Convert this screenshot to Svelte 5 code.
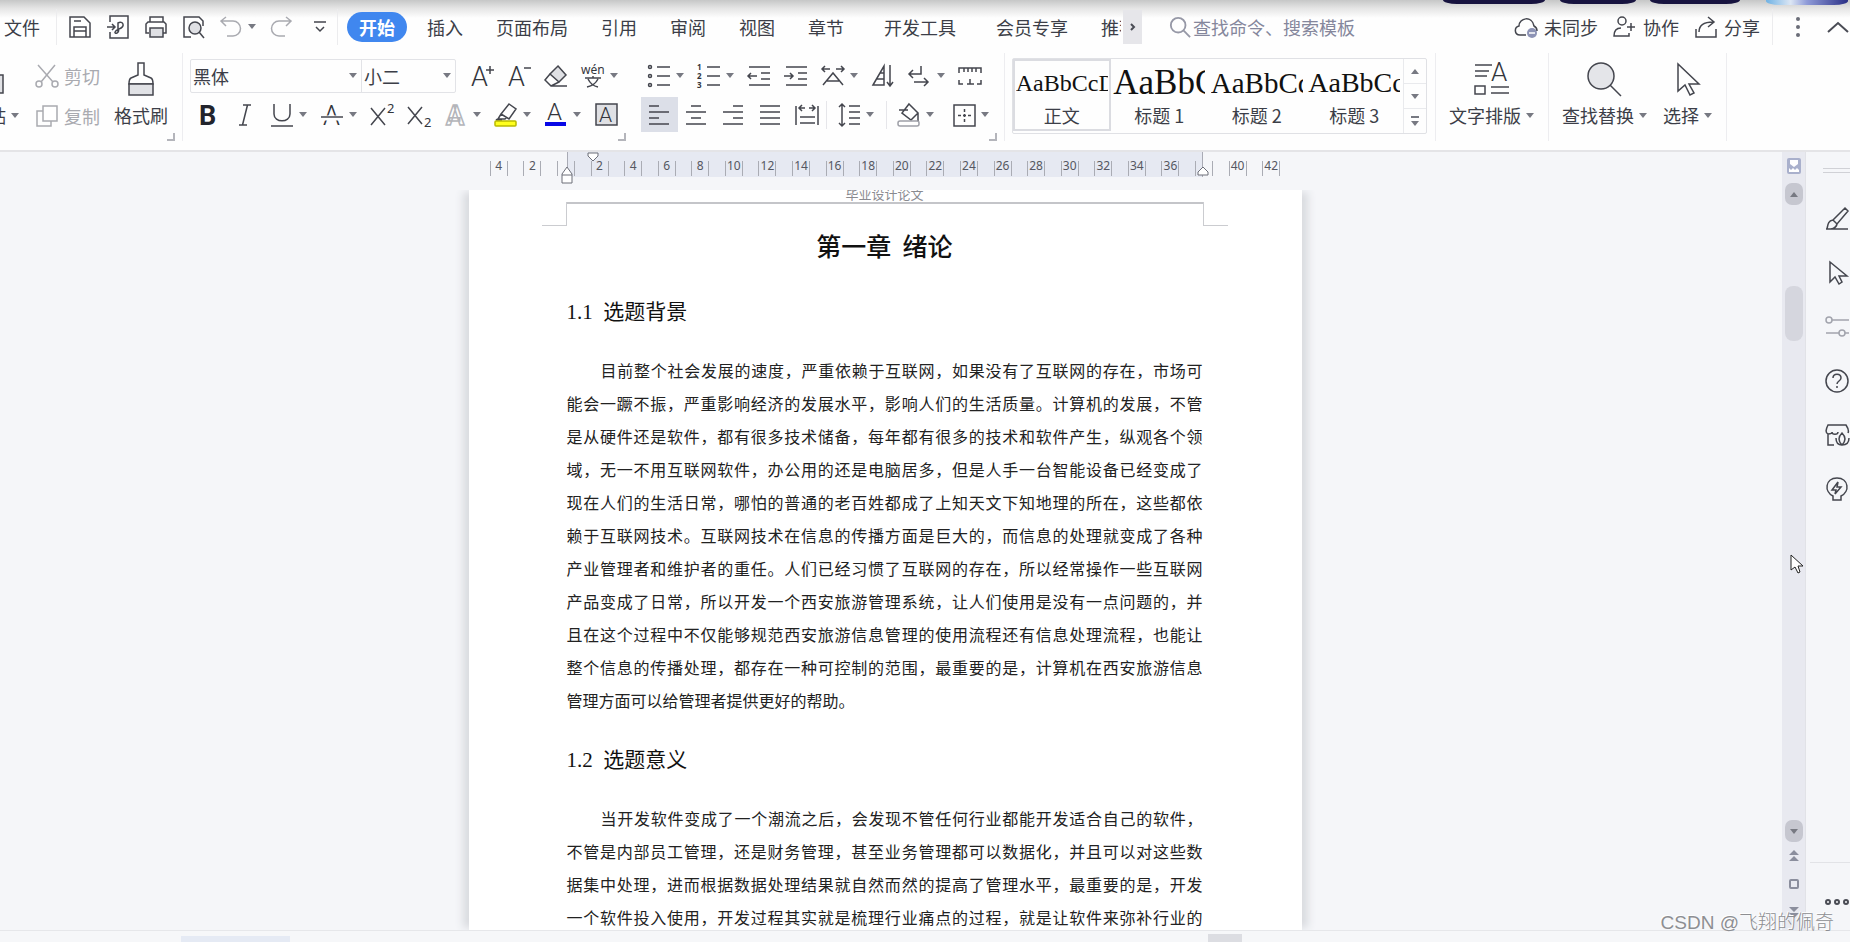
<script>
    let activeTab = $state("开始");
    let align = $state("left");
    let style = $state("正文");
    let fontName = $state("黑体");
    let fontSize = $state("小二");
    let query = $state("");

    const A = (x, y, size) =>
        `<text x="${x}" y="${y}" font-size="${size}" font-family="Roboto, sans-serif" font-weight="300" stroke="none" fill="#33353c">A</text>`;

    // inner markup of the icons, drawn on a 24 x 24 grid
    const icons = {
        save: `<path d="M2 2h14l6 6v14H2z"/><path d="M6 22v-10h12v10M6 6h7M6 16h12" />`,
        output: `<path d="M4 7V1h18v22H4v-6M1 12h8M6 9l3 3-3 3"/><path d="M12 17V8c5-3 8 4 1 6-5 2-5 5-2 4 2-1 2-3 1-4"/>`,
        print: `<path d="M6 7V2h13v5M5 18H2V9l2-2h16l2 2v9h-3"/><path d="M6 13h13v9H6z" fill="#dfe0e4"/>`,
        preview: `<path d="M9 22H2V2h15l4 4v5"/><circle cx="13" cy="13" r="6" fill="#dfe0e4"/><path d="M17 17l5 6"/>`,
        undo: `<path d="M6 2L1 6l5 5M1 6h12a7 7 0 0 1 0 15H7"/>`,
        redo: `<path d="M16 2l5 4-5 5M21 6H9a7 7 0 0 0 0 15h6"/>`,
        more: `<path d="M6 7h12M8 12l4 4 4-4"/>`,
        cut: `<path d="M3 1l15 17M20 1L6 18"/><circle cx="4" cy="20" r="3"/><circle cx="20" cy="20" r="3"/>`,
        copy: `<path d="M8 2h14v15H8z" fill="#fff"/><path d="M8 7H2v15h14v-5"/>`,
        grow: A(1, 22, 27) + `<path d="M20 2v8M16 6h8"/>`,
        shrink: A(1, 22, 27) + `<path d="M17 4h7"/>`,
        eraser: `<path d="M14 2l8 9-7 7-9-8z" fill="#dfe0e4"/><path d="M6 10l-5 6 6 6h16M7 22l8-4"/>`,
        pinyin: `<text x="0" y="10" font-size="12" font-family="Noto Sans, sans-serif" stroke="none" fill="#33353c">wén</text><path d="M4 14h16M12 12v2M7 15c2 4 5 7 10 8M17 15c-2 4-6 7-11 8"/>`,
        bold: `<text x="3" y="22" font-size="27" font-family="Roboto, sans-serif" font-weight="700" stroke="none" fill="#22242c">B</text>`,
        italic: `<path d="M10 2h8M6 22h8M14.500 2l-5 20"/>`,
        underline: `<path d="M4 1v10c0 9 16 9 16 0V1M1 23h22"/>`,
        strike: A(3, 22, 27) + `<path d="M4 15h17" stroke="#fff" stroke-width="5"/><path d="M1 14h22"/>`,
        sup: `<path d="M1 5l14 17M15 5L1 22"/><text x="17" y="10" font-size="13" font-family="Noto Sans, sans-serif" stroke="none" fill="#33353c">2</text>`,
        sub: `<path d="M1 4l14 17M15 4L1 21"/><text x="17" y="24" font-size="13" font-family="Noto Sans, sans-serif" stroke="none" fill="#33353c">2</text>`,
        outline: `<text x="2" y="22" font-size="27" font-family="Roboto, sans-serif" font-weight="700" fill="#fff" stroke="#b4b5ba">A</text>`,
        marker: `<path d="M15 1l7 5-7 10-8-5zM7 11l-3 5h7l2-2M4 16l-2 1h6"/><rect x="1" y="18" width="21" height="5" rx="1" fill="#ffff1e" stroke="#b9b900"/>`,
        color: A(3, 17, 24) + `<rect x="1" y="19" width="21" height="4" fill="#0808e6" stroke="none"/>`,
        shade: `<rect x="2" y="1" width="21" height="21" fill="#dfe0e4"/>` + A(5, 19, 21),
        bullets: `<path d="M10 3h13M10 12h13M10 21h13"/><circle cx="3" cy="3" r="1.500"/><circle cx="3" cy="12" r="1.500"/><circle cx="3" cy="21" r="1.500"/>`,
        numbers: `<path d="M10 3h13M10 12h13M10 21h13"/><g font-size="8" font-family="Noto Sans, sans-serif" font-weight="700" stroke="none" fill="#33353c"><text x="0" y="6">1</text><text x="0" y="15">2</text><text x="0" y="24">3</text></g>`,
        outdent: `<path d="M2 3h21M14 9h9M14 15h9M2 21h21M1 12h9M4 9l-3 3 3 3"/>`,
        indent: `<path d="M2 3h21M14 9h9M14 15h9M2 21h21M0 12h9M6 9l3 3-3 3"/>`,
        scale: `<path d="M1 5h8M4 2L1 5l3 3M15 5h8M20 2l3 3-3 3M2 21l10-12 10 12M6 17h12"/>`,
        sort: `<path d="M2 21L13 2v19zM6 15h7M9 9h4M19 1v20M16 18l3 4 3-4"/>`,
        enter: `<path d="M13 2v8H2M5 6l-4 4 4 4M6 18h14M16 14l4 4-4 4"/>`,
        tabs: `<path d="M1 9V4h22v5M6 4v4M10 4v4M14 4v4M18 4v4M1 16v4h4M23 16v4h-4M9 20h7M12 15v5"/>`,
        left: `<path d="M2 3h10M2 9h20M2 15h10M2 21h20"/>`,
        center: `<path d="M7 3h10M2 9h20M7 15h10M2 21h20"/>`,
        right: `<path d="M12 3h10M2 9h20M12 15h10M2 21h20"/>`,
        justify: `<path d="M2 3h20M2 9h20M2 15h20M2 21h20"/>`,
        spread: `<path d="M1 3v19M23 3v19M5 14h15M5 20h15M4 5h6M7 2L4 5l3 3M14 5h6M17 2l3 3-3 3"/>`,
        spacing: `<path d="M5 1v22M2 4l3-3 3 3M2 20l3 3 3-3M12 3h11M12 9h11M12 15h11M12 21h11"/>`,
        fill: `<path d="M12 1l9 9-7 7-9-7zM2 7h9M21 10v8"/><rect x="1" y="18" width="21" height="5" rx="2" fill="#fff" stroke="#9fa0a8"/>`,
        border: `<path d="M2 2h21v21H2z"/><path d="M12.500 6v13M6 12.500h13" stroke-dasharray="3 2"/>`,
        paste: `<path d="M2 5h11v7M2 3h4V1h4v2"/><path d="M1 13h17v18H1z" fill="#e1e2e6"/>`,
        brush: `<path d="M10 1h6v12l7 3c2 1 2 3 2 6H1c0-3 0-5 2-6l7-3z" /><path d="M1 22h24v11H1z" fill="#e1e2e6"/>`,
        layout: `<path d="M1 3h17M1 9h14M1 14h12M17 25h18M17 31h18"/><path d="M1 24h10v8H1z"/>` + A(17, 19, 26),
        find: `<circle cx="14" cy="14" r="13" fill="#e4e5e9"/><path d="M23 23l11 11"/>`,
        pick: `<path d="M4 2v27l7-6 5 10 4-2-5-9h10z"/>`,
        cloud: `<path d="M12 20H6C0 20 0 12 5 11c0-8 13-11 15 0 2 1 3 3 3 5"/><circle cx="18" cy="18" r="5" fill="#8d93b5" stroke="none"/><path d="M15 18h6" stroke="#fff"/>`,
        people: `<circle cx="9" cy="6" r="4"/><path d="M8 13c-5 0-7 3-7 8h15v-3M18 8v8M14 12h8"/>`,
        share: `<path d="M2 14v8h20v-8M5 17c0-7 5-10 14-10M14 2l6 5-6 5"/>`,
        pen: `<path d="M20 1l3 3-11 13-4-4zM8 13c-5 1-5 4-6 9 4 0 9 0 10-5M1 22h22"/>`,
        arrow: `<path d="M5 1v20l5-5 4 7 3-2-3-6h8z"/>`,
        sliders: `<path d="M7 5h17M1 18h13M20 18h4"/><circle cx="4" cy="5" r="3"/><circle cx="17" cy="18" r="3"/>`,
        help: `<circle cx="12" cy="12" r="11"/><path d="M8 9c0-5 8-5 8 0 0 3-4 3-4 6M12 17v2"/>`,
        shop: `<path d="M9 22H3V11C0 10 1 6 3 2h18c2 3 3 6 2 8M3 11c4 0 4-1 4-2 0 3 6 3 6 0"/><path d="M17 10c-4 4-4 8 0 12 4-4 4-8 0-12zM11 15c0 5 2 7 6 7 4 0 7-2 7-7"/>`,
        bulb: `<path d="M8 23v-4c-9-4-8-18 4-18s13 14 4 18v4z"/><path d="M13 5l-6 8h4l-1 4 6-7h-4z"/>`,
    };

    const tabs = ["插入", "页面布局", "引用", "审阅", "视图", "章节", "开发工具", "会员专享"];
    const quick = [["save", "保存"], ["output", "输出为PDF"], ["print", "打印"], ["preview", "打印预览"]];

    const fontTop = [["grow", "增大字号"], ["shrink", "减小字号"], ["eraser", "清除格式"], ["pinyin", "拼音指南", true]];
    const fontBottom = [
        ["bold", "加粗"], ["italic", "倾斜"], ["underline", "下划线", true], ["strike", "删除线", true],
        ["sup", "上标"], ["sub", "下标"], ["outline", "文字效果", true], ["marker", "突出显示", true],
        ["color", "字体颜色", true], ["shade", "字符底纹"],
    ];
    const paraTop = [
        ["bullets", "项目符号", true], ["numbers", "编号", true], ["outdent", "减少缩进量"], ["indent", "增加缩进量"],
        ["scale", "中文版式", true], ["sort", "排序"], ["enter", "显示/隐藏编辑标记", true], ["tabs", "制表位"],
    ];
    const aligns = ["left", "center", "right", "justify", "spread"];

    const styles = [
        { name: "正文", size: "s24" },
        { name: "标题 1", size: "s35" },
        { name: "标题 2", size: "s29" },
        { name: "标题 3", size: "s28" },
    ];

    const ruler = [];
    for (let i = -4; i <= 42; i += 2) ruler.push(i);

    const side = [["pen", "样式"], ["arrow", "选择"], ["sliders", "属性"], ["help", "帮助"], ["shop", "稿壳"], ["bulb", "灵感"]];

    const background = [
        "目前整个社会发展的速度，严重依赖于互联网，如果没有了互联网的存在，市场可",
        "能会一蹶不振，严重影响经济的发展水平，影响人们的生活质量。计算机的发展，不管",
        "是从硬件还是软件，都有很多技术储备，每年都有很多的技术和软件产生，纵观各个领",
        "域，无一不用互联网软件，办公用的还是电脑居多，但是人手一台智能设备已经变成了",
        "现在人们的生活日常，哪怕的普通的老百姓都成了上知天文下知地理的所在，这些都依",
        "赖于互联网技术。互联网技术在信息的传播方面是巨大的，而信息的处理就变成了各种",
        "产业管理者和维护者的重任。人们已经习惯了互联网的存在，所以经常操作一些互联网",
        "产品变成了日常，所以开发一个西安旅游管理系统，让人们使用是没有一点问题的，并",
        "且在这个过程中不仅能够规范西安旅游信息管理的使用流程还有信息处理流程，也能让",
        "整个信息的传播处理，都存在一种可控制的范围，最重要的是，计算机在西安旅游信息",
        "管理方面可以给管理者提供更好的帮助。",
    ];
    const meaning = [
        "当开发软件变成了一个潮流之后，会发现不管任何行业都能开发适合自己的软件，",
        "不管是内部员工管理，还是财务管理，甚至业务管理都可以数据化，并且可以对这些数",
        "据集中处理，进而根据数据处理结果就自然而然的提高了管理水平，最重要的是，开发",
        "一个软件投入使用，开发过程其实就是梳理行业痛点的过程，就是让软件来弥补行业的",
    ];
</script>

{#snippet icon(name, box = "0 0 24 24")}
    <svg class="icon" viewBox={box} aria-hidden="true">{@html icons[name]}</svg>
{/snippet}

{#snippet caret()}
    <svg class="caret" viewBox="0 0 10 6" aria-hidden="true"><path d="M0 0h10L5 6z" /></svg>
{/snippet}

{#snippet tool([name, label, drop])}
    <button class="tool" class:drop aria-label={label} title={label}>
        {@render icon(name)}
        {#if drop}{@render caret()}{/if}
    </button>
{/snippet}

{#snippet paragraph(lines, ends)}
    <p>
        {#each lines as line, i}
            <span class="line" class:first={i === 0} class:last={ends && i === lines.length - 1}>{line}</span>
        {/each}
    </p>
{/snippet}

<div class="app">
    <div class="overlay">
        <span class="pill p1"></span>
        <span class="pill p2"></span>
        <span class="pill p3"></span>
        <span class="pill glow"></span>
    </div>

    <header class="menu">
        <button class="file">文件</button>
        <div class="quick">
            {#each quick as [name, label]}
                <button aria-label={label}>{@render icon(name)}</button>
            {/each}
            <button class="faded undo" aria-label="撤销">{@render icon("undo")}{@render caret()}</button>
            <button class="faded" aria-label="恢复">{@render icon("redo")}</button>
            <button aria-label="自定义快速访问工具栏">{@render icon("more")}</button>
        </div>
        <nav class="tabs">
            <button class="start" class:active={activeTab === "开始"} onclick={() => (activeTab = "开始")}>开始</button>
            {#each tabs as tab}
                <button class:wide={tab.length > 3 && tab !== "页面布局"} onclick={() => (activeTab = tab)}>{tab}</button>
            {/each}
            <button class="cutoff">推荐</button>
            <button class="next" aria-label="更多选项卡">
                <svg viewBox="0 0 8 12"><path d="M2 3l3 3-3 3" /></svg>
            </button>
        </nav>
        <label class="search">
            <svg viewBox="0 0 24 24" aria-hidden="true"><circle cx="10" cy="10" r="8" /><path d="M16 16l7 7" /></svg>
            <input type="text" aria-label="查找命令" placeholder="查找命令、搜索模板" bind:value={query} />
        </label>
        <div class="account">
            <button>{@render icon("cloud")}未同步</button>
            <button>{@render icon("people")}协作</button>
            <button>{@render icon("share")}分享</button>
        </div>
        <button class="dots" aria-label="更多">
            <svg viewBox="0 0 4 20"><circle cx="2" cy="2" r="2" /><circle cx="2" cy="10" r="2" /><circle cx="2" cy="18" r="2" /></svg>
        </button>
        <button class="collapse" aria-label="隐藏功能区">
            <svg viewBox="0 0 24 14"><path d="M2 12L12 3l10 9" /></svg>
        </button>
    </header>

    <section class="ribbon">
        <div class="group clip">
            <button class="big paste">{@render icon("paste", "0 0 20 34")}<span>粘贴{@render caret()}</span></button>
            <div class="stack">
                <button class="faded">{@render icon("cut")}剪切</button>
                <button class="faded">{@render icon("copy")}复制</button>
            </div>
            <button class="big">{@render icon("brush", "0 0 26 34")}<span>格式刷</span></button>
            <i class="corner"></i>
        </div>

        <div class="group font">
            <div class="row">
                <div class="combo">
                    <span class="pick name">
                        <select aria-label="字体" bind:value={fontName}>
                            <option>黑体</option>
                            <option>宋体</option>
                        </select>
                        {@render caret()}
                    </span>
                    <span class="pick size">
                        <select aria-label="字号" bind:value={fontSize}>
                            <option>小二</option>
                            <option>小四</option>
                        </select>
                        {@render caret()}
                    </span>
                </div>
                {#each fontTop as t}{@render tool(t)}{/each}
            </div>
            <div class="row">
                {#each fontBottom as t}{@render tool(t)}{/each}
            </div>
            <i class="corner"></i>
        </div>

        <div class="group para">
            <div class="row">
                {#each paraTop as t}{@render tool(t)}{/each}
            </div>
            <div class="row">
                {#each aligns as name}
                    <button class="tool" class:on={align === name} aria-label={name} onclick={() => (align = name)}>
                        {@render icon(name)}
                    </button>
                {/each}
                <i class="bar"></i>
                {@render tool(["spacing", "行距", true])}
                <i class="bar"></i>
                {@render tool(["fill", "底纹颜色", true])}
                {@render tool(["border", "边框", true])}
            </div>
            <i class="corner"></i>
        </div>

        <div class="group">
            <div class="gallery">
                {#each styles as s}
                    <button class="style" class:chosen={style === s.name} onclick={() => (style = s.name)}>
                        <span class="sample {s.size}">AaBbCcDd</span>
                        <span class="label">{s.name}</span>
                    </button>
                {/each}
                <div class="spin">
                    <button class="up" aria-label="上一行">{@render caret()}</button>
                    <button aria-label="下一行">{@render caret()}</button>
                    <button class="all" aria-label="全部样式">{@render caret()}</button>
                </div>
            </div>
        </div>

        <div class="group">
            <button class="big">{@render icon("layout", "0 0 36 34")}<span>文字排版{@render caret()}</span></button>
        </div>
        <div class="group find">
            <button class="big">{@render icon("find", "0 0 36 34")}<span>查找替换{@render caret()}</span></button>
            <button class="big">{@render icon("pick", "0 0 28 34")}<span>选择{@render caret()}</span></button>
        </div>
    </section>

    <main>
        <div class="pane">
            <div class="ruler">
                <div class="band">
                    <svg class="mark first-line" viewBox="0 0 12 10"><path d="M1 1h10v3L6 9 1 4z" /></svg>
                    <svg class="mark hanging" viewBox="0 0 12 18"><path d="M1 8l5-7 5 7v9H1zM1 9h10" /></svg>
                    <svg class="mark end" viewBox="0 0 12 10"><path d="M1 9V6l5-5 5 5v3z" /></svg>
                </div>
                <div class="ticks">
                    {#each ruler as n}
                        <span>{n === 0 || n === 38 ? "" : Math.abs(n)}</span>
                    {/each}
                </div>
            </div>
            <div class="canvas">
                <article class="sheet">
                    <div class="running">毕业设计论文</div>
                    <div class="margins"><i></i><i></i></div>
                    <h1>{"第一章  绪论"}</h1>
                    <h2>1.1&nbsp; 选题背景</h2>
                    {@render paragraph(background, true)}
                    <h2>1.2&nbsp; 选题意义</h2>
                    {@render paragraph(meaning, false)}
                </article>
            </div>
        </div>

        <div class="scroll">
            <button class="flag" aria-label="标尺">
                <svg viewBox="0 0 16 18"><rect x="1" y="1" width="14" height="16" rx="2" /><path d="M4 3h8v4l-4 3-4-3zM3 11l2 2 2-2 2 2 2-2 2 2v2H3z" /></svg>
            </button>
            <button class="step up" aria-label="向上滚动">{@render caret()}</button>
            <div class="track"><div class="thumb"></div></div>
            <button class="step" aria-label="向下滚动">{@render caret()}</button>
            <button class="jump" aria-label="上一页"><svg viewBox="0 0 10 12"><path d="M5 0l5 5H0zM5 6l5 5H0z" /></svg></button>
            <button class="jump square" aria-label="选择浏览对象"><svg viewBox="0 0 10 12"><rect x="1" y="2" width="8" height="8" rx="1" /></svg></button>
            <button class="jump" aria-label="下一页"><svg viewBox="0 0 10 12"><path d="M0 1h10L5 6zM0 7h10l-5 5z" /></svg></button>
        </div>

        <aside>
            <div class="grip"></div>
            {#each side as [name, label]}
                <button class:pale={name === "sliders"} aria-label={label}>{@render icon(name)}</button>
            {/each}
            <div class="foot">
                <button aria-label="更多工具">
                    <svg viewBox="0 0 27 8"><circle cx="4" cy="4" r="2" /><circle cx="13" cy="4" r="2" /><circle cx="22" cy="4" r="2" /></svg>
                </button>
            </div>
        </aside>
    </main>

    <footer>
        <span class="view"></span>
        <span class="mode"></span>
    </footer>

    <svg class="pointer" viewBox="0 0 14 20" aria-hidden="true"><path d="M1 1v15l4-3 3 6 2-1-2-6h5z" /></svg>
    <div class="watermark">CSDN @飞翔的佩奇</div>
</div>

<style>
    :global(body) {
        margin: 0;
        overflow: hidden;
    }
    .app {
        position: relative;
        display: flex;
        flex-direction: column;
        height: 100vh;
        background: #fefefe;
        color: #3c3e48;
        font-family: "Noto Sans CJK SC", sans-serif;
        font-size: 18px;
        line-height: 24px;
        overflow: hidden;
    }
    button,
    input,
    select {
        font: inherit;
        color: inherit;
        background: none;
        border: 0;
        padding: 0;
        margin: 0;
        white-space: nowrap;
    }
    button {
        display: flex;
        align-items: center;
        flex-shrink: 0;
        cursor: pointer;
    }
    svg {
        display: block;
        flex-shrink: 0;
        fill: none;
        stroke: #4a4c55;
        stroke-width: 2;
    }
    .icon {
        width: 24px;
        height: 24px;
        overflow: visible;
        stroke: #44464e;
        stroke-width: 1.5;
    }
    .caret {
        width: 8px;
        height: 5px;
        fill: #777982;
        stroke: none;
    }
    .faded {
        color: #a9aab0;
    }
    .faded .icon {
        stroke: #a9aab0;
    }

    /* things floating over the top edge */
    .overlay {
        position: absolute;
        top: 0;
        right: 2px;
        display: flex;
        height: 5px;
        z-index: 2;
    }
    .pill {
        height: 4px;
        background: #17133f;
        border-radius: 0 0 14px 14px / 0 0 4px 4px;
    }
    .p1 {
        width: 102px;
        margin-right: 15px;
    }
    .p2 {
        width: 76px;
        margin-right: 14px;
    }
    .p3 {
        width: 90px;
        margin-right: 26px;
    }
    .glow {
        width: 82px;
        height: 5px;
        background: linear-gradient(90deg, #6fb2e4, #dce6f4 30%, #8f9bd8 50%, #2a2f86);
    }

    /* menu row */
    .menu {
        display: flex;
        align-items: center;
        height: 53px;
        background: linear-gradient(#c6c7c7, #e4e4e4 8px, #fefefe 18px);
    }
    .file {
        width: 57px;
        padding-left: 4px;
        height: 36px;
        border-right: 1px solid #ececee;
        box-sizing: border-box;
    }
    .quick {
        display: flex;
        gap: 14px;
        padding: 0 5px 0 11px;
        height: 36px;
        border-right: 1px solid #ececee;
    }
    .undo {
        gap: 4px;
    }
    .tabs {
        display: flex;
        align-items: center;
        padding-left: 9px;
    }
    .tabs button {
        padding: 0 17px 0 16px;
        height: 30px;
    }
    .tabs .start {
        padding: 0 12px;
        margin-right: 4px;
        border-radius: 15px;
    }
    .tabs .active {
        background: #4087ef;
        color: #fff;
        font-weight: 700;
    }
    .tabs .wide {
        margin-left: 7px;
    }
    .tabs .cutoff {
        width: 36px;
        padding-right: 0;
        overflow: hidden;
    }
    .tabs .next {
        width: 19px;
        height: 34px;
        margin-left: 2px;
        padding: 0;
        justify-content: center;
        background: #e6e6ea;
    }
    .next svg {
        width: 8px;
        height: 12px;
    }
    .search {
        display: flex;
        align-items: center;
        flex: 1;
        gap: 2px;
        min-width: 0;
        padding-left: 27px;
        color: #85879c;
    }
    .search svg {
        width: 22px;
        height: 22px;
        stroke: #9698a6;
    }
    .search input {
        flex: 1;
        min-width: 0;
        outline: none;
    }
    .search input::placeholder {
        color: #85879c;
        opacity: 1;
    }
    .account {
        display: flex;
        gap: 15px;
        padding-right: 12px;
        height: 36px;
        border-right: 1px solid #ececee;
    }
    .account button {
        gap: 6px;
    }
    .dots {
        padding: 0 26px 0 23px;
    }
    .dots svg {
        width: 4px;
        height: 20px;
        fill: #6b6d78;
        stroke: none;
    }
    .collapse svg {
        width: 24px;
        height: 14px;
    }

    /* ribbon */
    .ribbon {
        display: flex;
        height: 99px;
        border-bottom: 2px solid #e4e4e7;
        box-sizing: border-box;
    }
    .group {
        position: relative;
        display: flex;
        height: 88px;
        padding: 5px 8px 0 7px;
        border-right: 1px solid #ededf0;
        box-sizing: border-box;
        margin-bottom: 6px;
    }
    .clip {
        width: 183px;
        padding-left: 0;
    }
    .font {
        width: 451px;
        flex-direction: column;
        border-color: transparent;
    }
    .para {
        width: 371px;
        flex-direction: column;
    }
    .row {
        display: flex;
        align-items: center;
        height: 35px;
        margin-bottom: 4px;
    }
    .corner {
        position: absolute;
        right: 7px;
        bottom: 0;
        width: 6px;
        height: 6px;
        border: solid #b4b5bb;
        border-width: 0 2px 2px 0;
    }
    .tool {
        width: 37px;
        height: 35px;
        padding-left: 6px;
        gap: 5px;
    }
    .drop {
        width: 50px;
    }
    .on {
        background: #dcdfe8;
    }
    .bar {
        width: 1px;
        height: 28px;
        margin-right: 4px;
        background: #e6e6ea;
    }
    .bar + .tool {
        margin-right: 5px;
    }
    .big {
        flex-direction: column;
        align-items: center;
        padding: 4px 6px 0;
    }
    .big .icon {
        width: auto;
        height: 34px;
    }
    .big span {
        display: flex;
        align-items: center;
        gap: 5px;
        margin-top: 7px;
    }
    .find {
        gap: 4px;
    }
    .clip .big {
        padding: 4px 14px 0;
    }
    .clip .paste {
        margin-left: -44px;
        padding-right: 0;
    }
    .stack {
        display: flex;
        flex-direction: column;
        gap: 5px;
        margin-left: 16px;
    }
    .stack button {
        height: 35px;
        gap: 5px;
    }
    .combo {
        display: flex;
        width: 271px;
        height: 34px;
        margin-right: 8px;
        border: 1px solid #e2e3e7;
        border-radius: 2px;
        box-sizing: border-box;
    }
    .pick {
        display: flex;
        align-items: center;
        padding: 0 4px 0 2px;
    }
    .pick select {
        flex: 1;
        min-width: 0;
        height: 32px;
        appearance: none;
        outline: none;
    }
    .name {
        width: 164px;
        border-right: 1px solid #e2e3e7;
    }
    .size {
        flex: 1;
    }
    .gallery {
        display: flex;
        width: 415px;
        height: 76px;
        border: 1px solid #e0e1e5;
        border-radius: 2px;
        box-sizing: border-box;
    }
    .style {
        flex: 1;
        min-width: 0;
        height: 72px;
        flex-direction: column;
        overflow: hidden;
        border: 2px solid transparent;
        box-sizing: border-box;
    }
    .chosen {
        border-color: #dbdce1;
    }
    .sample {
        width: 92px;
        height: 42px;
        line-height: 44px;
        overflow: hidden;
        color: #111;
        font-family: "Liberation Serif", serif;
        text-align: left;
    }
    .s24 {
        font-size: 24px;
    }
    .s28 {
        font-size: 28px;
    }
    .s29 {
        font-size: 29px;
    }
    .s35 {
        font-size: 35px;
    }
    .spin {
        display: flex;
        flex-direction: column;
        width: 22px;
        border-left: 1px solid #e9eaed;
    }
    .spin button {
        flex: 1;
        justify-content: center;
        border-bottom: 1px solid #e9eaed;
    }
    .spin button:last-child {
        border-bottom: 0;
    }
    .up .caret {
        transform: rotate(180deg);
    }
    .all .caret {
        padding-top: 3px;
        border-top: 2px solid #777982;
    }

    /* document */
    main {
        display: flex;
        flex: 1;
        min-height: 0;
        background: #f5f6f9;
    }
    .pane {
        display: flex;
        flex-direction: column;
        flex: 1;
        min-width: 0;
    }
    .ruler {
        position: relative;
        display: flex;
        justify-content: center;
        height: 38px;
        padding-right: 12px;
    }
    .band {
        position: relative;
        width: 636px;
        height: 25px;
        background: #e6e9f2;
        border: solid #a9abb5;
        border-width: 0 1px;
        box-sizing: border-box;
    }
    .mark {
        position: absolute;
        width: 12px;
        fill: #fff;
        stroke: #6d6f79;
        stroke-width: 1;
        z-index: 1;
    }
    .first-line {
        left: 19px;
        top: 0;
    }
    .hanging {
        left: -7px;
        top: 14px;
    }
    .end {
        right: -7px;
        top: 14px;
    }
    .ticks {
        position: absolute;
        top: 9px;
        left: 0;
        right: 12px;
        margin: 0 auto;
        width: 806px;
        display: grid;
        grid-template-columns: repeat(24, 1fr);
        justify-items: center;
    }
    .ticks span {
        width: 18px;
        height: 15px;
        border: solid #aaacb4;
        border-width: 0 1px;
        box-sizing: border-box;
        font: 12px / 10px "Noto Sans", sans-serif;
        text-align: center;
        color: #555761;
    }
    .canvas {
        display: flex;
        justify-content: center;
        flex: 1;
        min-height: 0;
        padding-right: 12px;
        overflow: hidden;
    }
    .sheet {
        width: 636px;
        padding: 0 99px 0 98px;
        background: #fff;
        box-shadow: -8px 0 8px -2px #d9dbdf, 8px 0 8px -2px #d9dbdf;
        color: #111;
    }
    .running {
        height: 12px;
        border-bottom: 2px solid #c4c5c9;
        font-size: 13px;
        line-height: 8px;
        text-align: center;
        color: #8a8b90;
        overflow: hidden;
    }
    .margins {
        display: flex;
        justify-content: space-between;
        margin: -2px -25px 0;
    }
    .margins i {
        width: 25px;
        height: 24px;
        border: solid #cbccd0;
        border-width: 0 1px 1px 0;
        box-sizing: border-box;
    }
    .margins i:last-child {
        border-width: 0 0 1px 1px;
    }
    h1 {
        margin: 1px 0 34px;
        font-size: 25px;
        font-weight: 500;
        line-height: 36px;
        text-align: center;
        white-space: pre;
    }
    h2 {
        margin: 28px 0 27px;
        font-family: "Liberation Serif", "Noto Sans CJK SC", serif;
        font-size: 21px;
        font-weight: 400;
        line-height: 30px;
    }
    p {
        margin: 0;
        font-size: 16px;
        line-height: 33px;
        color: #222;
    }
    .line {
        display: block;
        white-space: nowrap;
        text-align: justify;
        text-align-last: justify;
    }
    .first {
        padding-left: 34px;
    }
    .last {
        text-align-last: left;
    }

    .scroll {
        display: flex;
        flex-direction: column;
        align-items: center;
        width: 24px;
        padding: 4px 0;
        background: #e8e9f0;
        border-right: 1px solid #e1e2e7;
        box-sizing: border-box;
    }
    .scroll button {
        justify-content: center;
        width: 18px;
    }
    .flag {
        height: 20px;
        margin-bottom: 7px;
    }
    .flag svg {
        width: 16px;
        height: 18px;
        fill: #a9b0cc;
        stroke: none;
    }
    .flag path {
        fill: #fff;
    }
    .step {
        height: 22px;
        border-radius: 7px;
        background: #c6c7d0;
    }
    .track {
        flex: 1;
        width: 18px;
        padding-top: 81px;
    }
    .thumb {
        height: 55px;
        border-radius: 8px;
        background: #d5d6de;
    }
    .jump {
        height: 28px;
    }
    .jump svg {
        width: 10px;
        height: 12px;
        fill: #8b8e9d;
        stroke: none;
    }
    .square svg {
        fill: none;
        stroke: #8b8e9d;
    }

    aside {
        display: flex;
        flex-direction: column;
        width: 44px;
        overflow: hidden;
    }
    .grip {
        height: 3px;
        margin: 16px 0 19px 17px;
        border: solid #d0d1d6;
        border-width: 1px 0;
    }
    aside button {
        height: 54px;
        padding-left: 19px;
    }
    .pale .icon {
        stroke: #a2a4ad;
    }
    .foot {
        margin: auto 0 0 4px;
        padding-bottom: 1px;
        border-top: 1px solid #e2e3e7;
    }
    .foot button {
        height: 66px;
        padding: 12px 0 0 14px;
    }
    .foot svg {
        width: 27px;
        height: 8px;
    }

    footer {
        display: flex;
        align-items: flex-end;
        justify-content: space-between;
        height: 12px;
        padding: 0 608px 0 181px;
        background: #f6f7f9;
        border-top: 1px solid #e6e7ea;
        box-sizing: border-box;
    }
    .view {
        width: 109px;
        height: 6px;
        background: #e5eaf4;
    }
    .mode {
        width: 34px;
        height: 8px;
        background: #dcdde2;
    }

    .pointer {
        position: absolute;
        right: 46px;
        top: 554px;
        width: 14px;
        height: 20px;
        fill: #fff;
        stroke: #222;
        stroke-width: 1;
    }
    .watermark {
        position: absolute;
        right: 16px;
        bottom: 7px;
        color: #8d8e92;
        font-family: "Liberation Sans", "Noto Sans CJK SC", sans-serif;
        font-size: 19px;
        font-weight: 300;
        text-shadow: -1px -1px 0 #fff;
    }
</style>
